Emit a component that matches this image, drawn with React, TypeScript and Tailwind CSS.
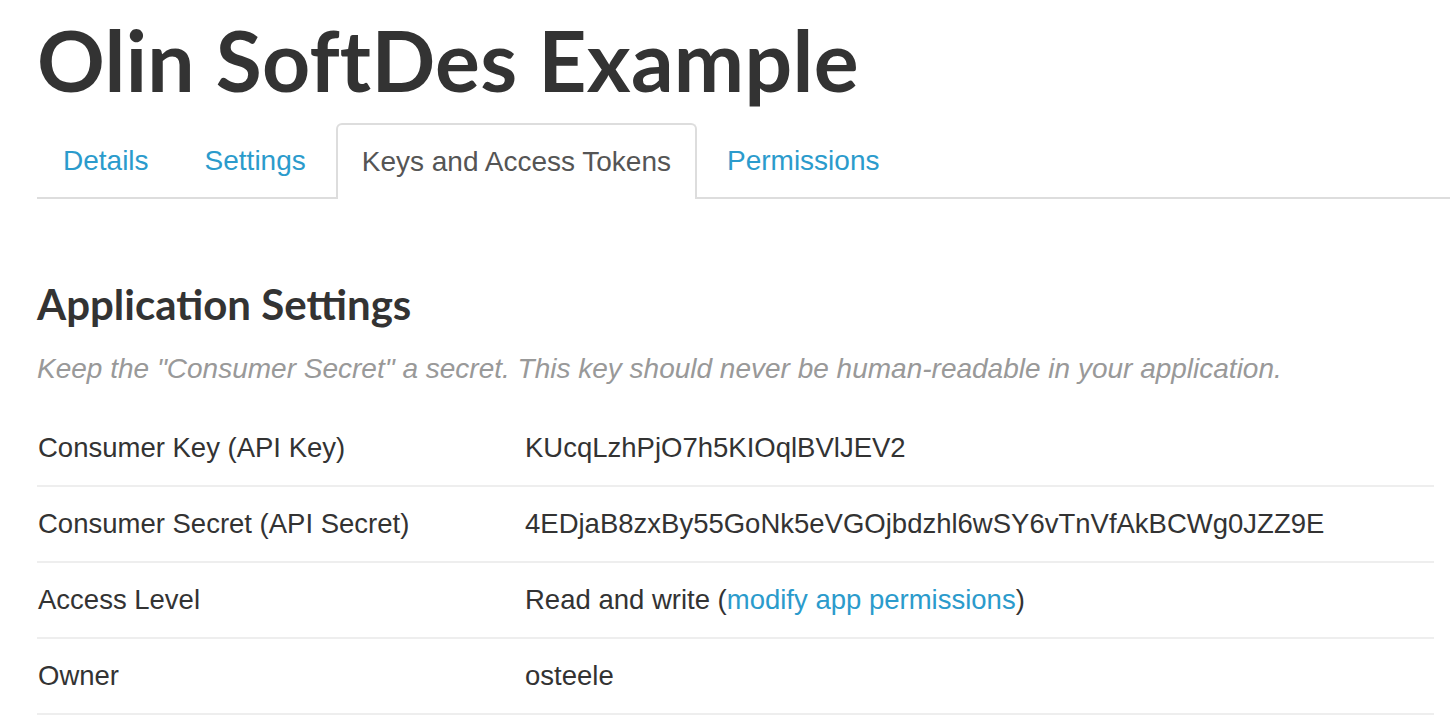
import React from "react";

const rows: { label: string; value: React.ReactNode }[] = [
  { label: "Consumer Key (API Key)", value: "KUcqLzhPjO7h5KIOqlBVlJEV2" },
  { label: "Consumer Secret (API Secret)", value: "4EDjaB8zxBy55GoNk5eVGOjbdzhl6wSY6vTnVfAkBCWg0JZZ9E" },
  {
    label: "Access Level",
    value: (
      <>
        Read and write (<a className="text-[#2b9bcc]">modify app permissions</a>)
      </>
    ),
  },
  { label: "Owner", value: "osteele" },
];

const tabs = ["Details", "Settings", "Keys and Access Tokens", "Permissions"];

export default function App() {
  return (
    <div className="min-h-screen bg-white pl-[37px] text-[#333] font-['Liberation_Sans',Arial,sans-serif]">
      <h1 className="pt-[12px] text-[84px] leading-[96px] font-bold tracking-[0.3px] font-['Lato','Liberation_Sans',sans-serif] text-[#333]">
        Olin SoftDes Example
      </h1>

      {/* Tabs */}
      <div className="mt-[15px] flex border-b-2 border-[#ddd]">
        {tabs.map((t) => {
          const active = t === "Keys and Access Tokens";
          return (
            <div
              key={t}
              className={
                active
                  ? "-mb-[2px] mr-[4px] h-[76px] px-[24px] flex items-center rounded-t-[6px] border-2 border-b-0 border-[#ddd] bg-white text-[28px] text-[#555]"
                  : "mr-[4px] h-[74px] px-[24px] flex items-center border-2 border-b-0 border-transparent text-[28px] text-[#2b9bcc]"
              }
            >
              {t}
            </div>
          );
        })}
      </div>

      <h2 className="mt-[80px] text-[42px] leading-[50px] font-bold font-['Lato','Liberation_Sans',sans-serif] text-[#333]">
        Application Settings
      </h2>
      <p className="mt-[23px] text-[28px] leading-[34px] italic text-[#999]">
        Keep the "Consumer Secret" a secret. This key should never be human-readable in your application.
      </p>

      <div className="mt-[25px] w-[1397px]">
        {rows.map((r) => (
          <div key={r.label} className="flex h-[76px] items-center border-b-2 border-[#eee] text-[27.5px] text-[#333]">
            <div className="w-[488px] pl-[1px]">{r.label}</div>
            <div>{r.value}</div>
          </div>
        ))}
      </div>
    </div>
  );
}
